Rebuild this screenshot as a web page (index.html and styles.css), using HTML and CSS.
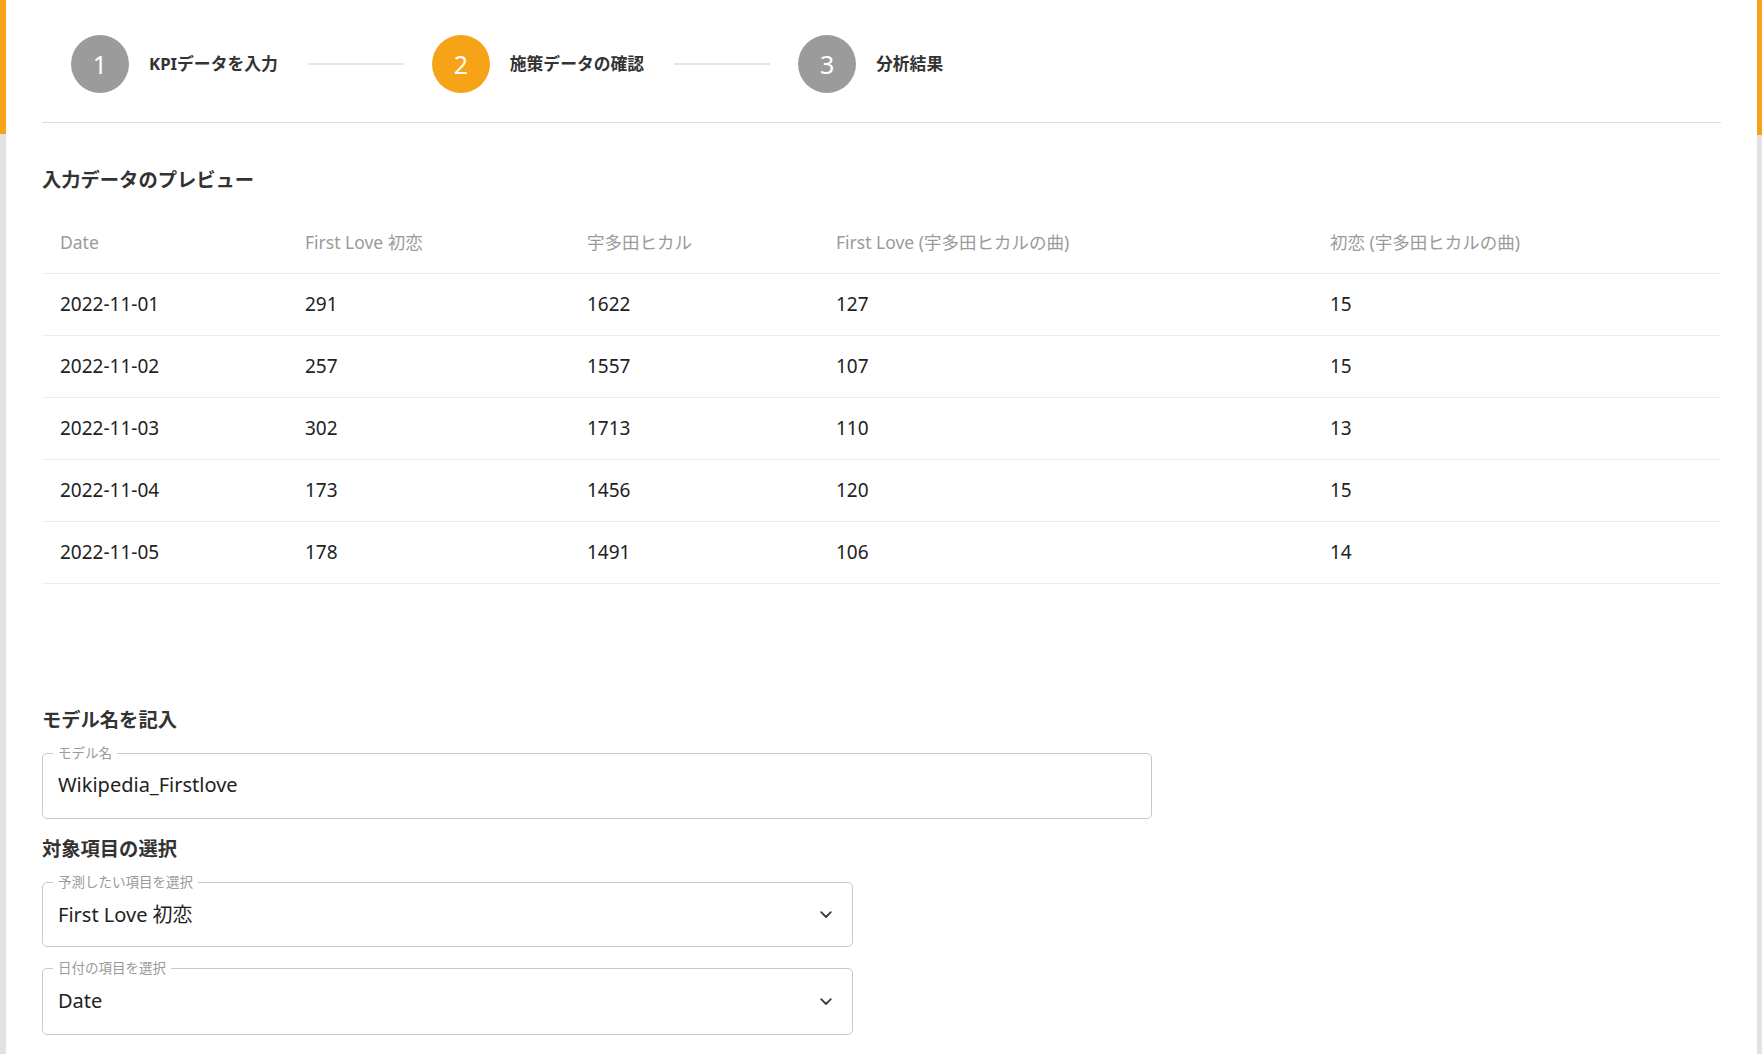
FILE: index.html
```html
<!DOCTYPE html>
<html lang="ja">
<head>
<meta charset="utf-8">
<title>施策データの確認</title>
<link rel="stylesheet" href="styles.css">
</head>
<body>
<div class="page">
  <div class="edge edge-left"><div class="edge-thumb"></div></div>
  <main class="main">
    <nav class="stepper">
      <div class="step">
        <div class="circle">1</div>
        <div class="step-label">KPIデータを入力</div>
      </div>
      <div class="connector"></div>
      <div class="step">
        <div class="circle active">2</div>
        <div class="step-label">施策データの確認</div>
      </div>
      <div class="connector"></div>
      <div class="step">
        <div class="circle">3</div>
        <div class="step-label">分析結果</div>
      </div>
    </nav>

    <h2 class="section-title preview-title">入力データのプレビュー</h2>
    <table class="data-table">
      <colgroup>
        <col class="c1"><col class="c2"><col class="c3"><col class="c4"><col class="c5">
      </colgroup>
      <thead>
        <tr><th>Date</th><th>First Love 初恋</th><th>宇多田ヒカル</th><th>First Love (宇多田ヒカルの曲)</th><th>初恋 (宇多田ヒカルの曲)</th></tr>
      </thead>
      <tbody>
        <tr><td>2022-11-01</td><td>291</td><td>1622</td><td>127</td><td>15</td></tr>
        <tr><td>2022-11-02</td><td>257</td><td>1557</td><td>107</td><td>15</td></tr>
        <tr><td>2022-11-03</td><td>302</td><td>1713</td><td>110</td><td>13</td></tr>
        <tr><td>2022-11-04</td><td>173</td><td>1456</td><td>120</td><td>15</td></tr>
        <tr><td>2022-11-05</td><td>178</td><td>1491</td><td>106</td><td>14</td></tr>
      </tbody>
    </table>

    <h2 class="section-title model-title">モデル名を記入</h2>
    <div class="field field-wide">
      <span class="field-label">モデル名</span>
      <div class="field-value">Wikipedia_Firstlove</div>
    </div>

    <h2 class="section-title target-title">対象項目の選択</h2>
    <div class="field field-select first">
      <span class="field-label">予測したい項目を選択</span>
      <div class="field-value">First Love 初恋</div>
      <svg class="chevron" width="12" height="8" viewBox="0 0 12 8"><polyline points="1.2,1.2 6,6 10.8,1.2" fill="none" stroke="#3c3c3c" stroke-width="1.8" stroke-linecap="round" stroke-linejoin="round"/></svg>
    </div>
    <div class="field field-select second">
      <span class="field-label">日付の項目を選択</span>
      <div class="field-value">Date</div>
      <svg class="chevron" width="12" height="8" viewBox="0 0 12 8"><polyline points="1.2,1.2 6,6 10.8,1.2" fill="none" stroke="#3c3c3c" stroke-width="1.8" stroke-linecap="round" stroke-linejoin="round"/></svg>
    </div>
  </main>
  <div class="edge edge-right"><div class="edge-thumb right"></div></div>
</div>
</body>
</html>
```

FILE: styles.css
```css
html, body {
  margin: 0;
  padding: 0;
  height: 100%;
  overflow: hidden;
  background: #ffffff;
}

body {
  font-family: "Noto Sans", "Noto Sans CJK JP", sans-serif;
  color: #222222;
}

.page {
  display: flex;
  height: 1054px;
}

.edge {
  background: #e2e2e2;
  flex: 0 0 auto;
}

.edge-left {
  width: 6px;
}

.edge-right {
  width: 5px;
}

.edge-thumb {
  height: 134px;
  background: #f6a31a;
}

.edge-thumb.right {
  height: 135px;
}

.main {
  flex: 1;
  padding: 0 36px 0 36px;
  min-width: 0;
}

/* Stepper */
.stepper {
  display: flex;
  align-items: center;
  padding: 35px 0 29px 29px;
  border-bottom: 1px solid #dddddd;
}

.step {
  display: flex;
  align-items: center;
  gap: 20px;
}

.circle {
  width: 58px;
  height: 58px;
  border-radius: 50%;
  background: #9b9b9b;
  color: #ffffff;
  display: flex;
  align-items: center;
  justify-content: center;
  font-size: 25px;
  line-height: 1;
}

.circle.active {
  background: #f6a317;
}

.step-label {
  font-size: 16.8px;
  font-weight: 700;
  color: #333333;
  margin-top: -3px;
}

.connector {
  width: 96px;
  height: 2px;
  background: #e6e6e6;
  margin: 0 28px 0 30px;
}

/* Section titles */
.section-title {
  margin: 0;
  font-size: 19.3px;
  line-height: 28px;
  font-weight: 700;
  color: #333333;
}

.preview-title {
  margin-top: 43px;
}

.model-title {
  margin-top: 122px;
}

.target-title {
  margin-top: 16px;
}

/* Table */
.data-table {
  width: 100%;
  border-collapse: separate;
  border-spacing: 0;
  table-layout: fixed;
  margin-top: 18px;
  font-size: 17.5px;
}

.c1 { width: 245px; }
.c2 { width: 282px; }
.c3 { width: 249px; }
.c4 { width: 494px; }
.c5 { width: auto; }

.data-table th,
.data-table td {
  text-align: left;
  padding: 0 18px;
  height: 61px;
  line-height: 61px;
  border-bottom: 1px solid #eeeeee;
  white-space: nowrap;
}

.data-table th {
  font-weight: 400;
  color: #9a9a9a;
}

.data-table td {
  color: #222222;
  font-size: 19px;
}

/* Fields */
.field {
  position: relative;
  box-sizing: border-box;
  border: 1px solid #c8c8c8;
  border-radius: 5px;
  height: 66px;
  display: flex;
  align-items: center;
  padding: 0 15px;
}

.field-wide {
  width: 1110px;
  margin-top: 19px;
}

.field-select {
  width: 811px;
}

.field-select.first {
  height: 65px;
  margin-top: 19px;
}

.field-select.second {
  height: 67px;
  margin-top: 21px;
}

.field-label {
  position: absolute;
  top: -9px;
  left: 10px;
  padding: 0 5px;
  background: #ffffff;
  font-size: 13.5px;
  line-height: 16px;
  color: #9a9a9a;
}

.field-value {
  font-size: 20px;
  color: #222222;
  flex: 1;
  margin-top: -3px;
}

.chevron {
  flex: 0 0 auto;
  margin-right: 5px;
}
```
